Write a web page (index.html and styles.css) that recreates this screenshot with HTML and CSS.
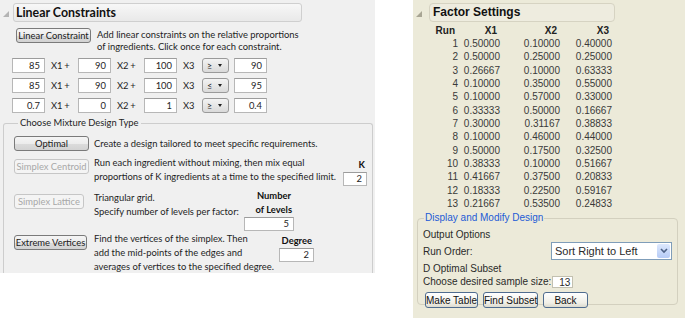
FILE: index.html
```html
<!DOCTYPE html>
<html lang="en">
<head>
    <meta charset="UTF-8">
    <meta name="viewport" content="width=device-width, initial-scale=1.0">
    <title>Mixture Design</title>
    <link rel="stylesheet" href="styles.css">
</head>
<body>
    <div class="page">
        <section class="panel-left">
            <div class="outline-head">
                <svg class="disclosure" width="8" height="8" viewBox="0 0 8 8"><polygon points="7,1 7,7 1,7" fill="#b4b4b4"/></svg>
                <div class="outline-title">Linear Constraints</div>
            </div>

            <div class="lc-intro">
                <button class="btn btn--lc">Linear Constraint</button>
                <p>Add linear constraints on the relative proportions<br>of ingredients. Click once for each constraint.</p>
            </div>

            <div class="lc-row">
                <span class="num">85</span><span class="term">X1 +</span>
                <span class="num">90</span><span class="term">X2 +</span>
                <span class="num">100</span><span class="term term--last">X3</span>
                <span class="combo">&ge;<i class="caret"></i></span>
                <span class="num">90</span>
            </div>
            <div class="lc-row">
                <span class="num">85</span><span class="term">X1 +</span>
                <span class="num">90</span><span class="term">X2 +</span>
                <span class="num">100</span><span class="term term--last">X3</span>
                <span class="combo">&le;<i class="caret"></i></span>
                <span class="num">95</span>
            </div>
            <div class="lc-row">
                <span class="num">0.7</span><span class="term">X1 +</span>
                <span class="num">0</span><span class="term">X2 +</span>
                <span class="num">1</span><span class="term term--last">X3</span>
                <span class="combo">&ge;<i class="caret"></i></span>
                <span class="num">0.4</span>
            </div>

            <fieldset class="design-type">
                <legend>Choose Mixture Design Type</legend>

                <div class="opt-row opt-row--first">
                    <div class="opt-btn"><button class="btn btn--opt">Optimal</button></div>
                    <p class="opt-text">Create a design tailored to meet specific requirements.</p>
                </div>

                <div class="opt-row">
                    <div class="opt-btn"><button class="btn btn--centroid" disabled>Simplex Centroid</button></div>
                    <p class="opt-text opt-text--k">Run each ingredient without mixing, then mix equal<br>proportions of K ingredients at a time to the specified limit.</p>
                    <div class="param param--k">
                        <b>K</b>
                        <span class="num num--k">2</span>
                    </div>
                </div>

                <div class="opt-row">
                    <div class="opt-btn"><button class="btn btn--lattice" disabled>Simplex Lattice</button></div>
                    <p class="opt-text opt-text--lattice">Triangular grid.<br>Specify number of levels per factor:</p>
                    <div class="param param--levels">
                        <b>Number</b>
                        <b>of Levels</b>
                        <span class="num num--levels">5</span>
                    </div>
                </div>

                <div class="opt-row opt-row--last">
                    <div class="opt-btn"><button class="btn btn--ev">Extreme Vertices</button></div>
                    <p class="opt-text opt-text--ev">Find the vertices of the simplex. Then<br>add the mid-points of the edges and<br>averages of vertices to the specified degree.</p>
                    <div class="param param--degree">
                        <b>Degree</b>
                        <span class="num num--degree">2</span>
                    </div>
                </div>
            </fieldset>
        </section>

        <section class="panel-right">
            <div class="outline-head outline-head--xp">
                <svg class="disclosure" width="8" height="8" viewBox="0 0 8 8"><polygon points="7,1 7,7 1,7" fill="#a8a594"/></svg>
                <div class="outline-title">Factor Settings</div>
            </div>

            <div class="factor-table">
                <b>Run</b><b>X1</b><b>X2</b><b>X3</b>
                <span>1</span><span>0.50000</span><span>0.10000</span><span>0.40000</span>
                <span>2</span><span>0.50000</span><span>0.25000</span><span>0.25000</span>
                <span>3</span><span>0.26667</span><span>0.10000</span><span>0.63333</span>
                <span>4</span><span>0.10000</span><span>0.35000</span><span>0.55000</span>
                <span>5</span><span>0.10000</span><span>0.57000</span><span>0.33000</span>
                <span>6</span><span>0.33333</span><span>0.50000</span><span>0.16667</span>
                <span>7</span><span>0.30000</span><span>0.31167</span><span>0.38833</span>
                <span>8</span><span>0.10000</span><span>0.46000</span><span>0.44000</span>
                <span>9</span><span>0.50000</span><span>0.17500</span><span>0.32500</span>
                <span>10</span><span>0.38333</span><span>0.10000</span><span>0.51667</span>
                <span>11</span><span>0.41667</span><span>0.37500</span><span>0.20833</span>
                <span>12</span><span>0.18333</span><span>0.22500</span><span>0.59167</span>
                <span>13</span><span>0.21667</span><span>0.53500</span><span>0.24833</span>
            </div>

            <fieldset class="modify">
                <legend>Display and Modify Design</legend>
                <div class="mod-line">Output Options</div>
                <div class="mod-line mod-line--order">
                    <span>Run Order:</span>
                    <div class="select">
                        <span>Sort Right to Left</span>
                        <span class="select-btn">
                            <svg width="8" height="6" viewBox="0 0 8 6"><polyline points="1,1 4,4 7,1" fill="none" stroke="#4d6185" stroke-width="1.6"/></svg>
                        </span>
                    </div>
                </div>
                <div class="mod-line">D Optimal Subset</div>
                <div class="mod-line mod-line--size">
                    <span>Choose desired sample size:</span>
                    <span class="xp-num">13</span>
                </div>
                <div class="mod-actions">
                    <button class="xp-btn xp-btn--make">Make Table</button>
                    <button class="xp-btn xp-btn--find">Find Subset</button>
                    <button class="xp-btn xp-btn--back">Back</button>
                </div>
            </fieldset>
        </section>
    </div>
</body>
</html>
```

FILE: styles.css
```css
body {
    margin: 0;
    background: #ffffff;
    font-family: Lato, "Noto Sans", sans-serif;
    font-size: 9.4px;
    color: #1e1e1e;
}
.page {
    display: flex;
    align-items: flex-start;
}
p {
    margin: 0;
}

/* left: JMP style panel */
.panel-left {
    width: 375px;
    height: 273px;
    background: #f0f0f0;
    padding-top: 3px;
    box-sizing: border-box;
    overflow: hidden;
}
.outline-head {
    display: flex;
    align-items: center;
    height: 19px;
}
.disclosure {
    margin: 2px 3px 0 2px;
}
.outline-title {
    width: 289px;
    height: 19px;
    box-sizing: border-box;
    border: 1px solid #cfcfcf;
    border-radius: 3px;
    background: linear-gradient(#f7f7f7, #e9e9e9);
    font-weight: bold;
    font-size: 12.4px;
    line-height: 17px;
    padding-left: 2px;
    color: #111;
}
.lc-intro {
    display: flex;
    align-items: flex-start;
    margin-top: 6px;
    padding-left: 16px;
}
.lc-intro p {
    margin: 1px 0 0 6px;
    line-height: 12px;
    white-space: nowrap;
}
.btn {
    height: 15px;
    padding: 0;
    border: 1px solid #7a7a7a;
    border-radius: 3px;
    background: linear-gradient(#f5f5f5 0%, #ececec 50%, #dcdcdc 51%, #d2d2d2 100%);
    font-family: inherit;
    font-size: 9.4px;
    line-height: 13px;
    color: #1a1a1a;
    white-space: nowrap;
}
.btn--lc { width: 75px; }
.btn--opt { width: 75px; }
.btn--centroid { width: 75px; }
.btn--lattice { width: 70px; }
.btn--ev { width: 73px; }
.btn:disabled {
    border-color: #c6c6c6;
    background: #f4f4f4;
    color: #a8a8a8;
}

.lc-row {
    display: flex;
    align-items: center;
    height: 15px;
    margin-top: 5px;
    padding-left: 12px;
}
.num {
    display: block;
    width: 33px;
    height: 15px;
    box-sizing: border-box;
    border: 1px solid #b7b7b7;
    border-top-color: #9c9c9c;
    background: #ffffff;
    text-align: right;
    padding-right: 4px;
    line-height: 13px;
}
.term {
    width: 33px;
    padding-left: 6px;
    box-sizing: border-box;
    letter-spacing: -0.2px;
}
.term--last {
    width: 25px;
}
.combo {
    display: flex;
    align-items: center;
    width: 27px;
    height: 15px;
    box-sizing: border-box;
    margin-right: 5px;
    padding-left: 4px;
    border: 1px solid #9a9a9a;
    border-radius: 3px;
    background: linear-gradient(#f3f3f3, #dadada);
    font-size: 9px;
}
.caret {
    margin-left: 6px;
    border-left: 2.5px solid transparent;
    border-right: 2.5px solid transparent;
    border-top: 3px solid #222;
}

.design-type {
    margin: 4px 2px 0 3px;
    padding: 7px 0 0 10px;
    height: 160px;
    border: 1px solid #cdcdcd;
    border-bottom: none;
    border-radius: 3px 3px 0 0;
}
.design-type legend {
    padding: 0 2px;
    margin-left: 4px;
    line-height: 12px;
}
.opt-row {
    display: flex;
    align-items: flex-start;
    margin-top: 5px;
}
.opt-row--first {
    margin-top: 0;
}
.opt-row--last {
    margin-top: 1px;
}
.opt-btn {
    width: 80px;
    flex-shrink: 0;
    padding-top: 3px;
}
.opt-row--first .opt-btn {
    padding-top: 0;
}
.opt-text {
    line-height: 14px;
    white-space: nowrap;
}
.opt-row--first .opt-text {
    margin-top: 1px;
}
.opt-text--k { width: 249px; }
.opt-text--lattice { width: 150px; }
.opt-text--ev { width: 185px; }
.param {
    display: flex;
    flex-direction: column;
    align-items: flex-end;
    line-height: 14px;
}
.param b {
    padding-right: 2px;
    color: #111;
}
.num--k {
    width: 24px;
    height: 14px;
    line-height: 12px;
}
.num--levels {
    width: 50px;
    height: 14px;
    line-height: 12px;
}
.num--degree {
    width: 35px;
    height: 14px;
    line-height: 12px;
}
.param--k {
    margin-top: 2px;
}
.param--levels {
    margin-top: -2px;
}
.param--levels b:first-child {
    padding-right: 3px;
}
.param--degree {
    margin-top: 2px;
}

/* right: XP style panel */
.panel-right {
    width: 272px;
    height: 318px;
    margin-left: 38px;
    padding-top: 3px;
    box-sizing: border-box;
    background: #ecead9;
    font-family: "Liberation Sans", Arial, sans-serif;
    font-size: 10px;
    color: #2a2a2a;
}
.outline-head--xp .disclosure {
    margin: 2px 6px 0 2px;
}
.outline-head--xp .outline-title {
    width: 186px;
    border-color: #d6d3c2;
    border-radius: 4px;
    background: #eeecdf;
    font-family: "Liberation Sans", Arial, sans-serif;
    font-size: 12px;
    padding-left: 3px;
    color: #111;
}
.factor-table {
    display: grid;
    grid-template-columns: 45px 42px 60px 52px;
    grid-template-rows: 12px;
    grid-auto-rows: 13.33px;
    margin-top: 3px;
    text-align: right;
    color: #3a3a3a;
}
.factor-table b {
    color: #222;
    line-height: 12px;
    padding-right: 3px;
}
.factor-table span {
    line-height: 13.33px;
}

.modify {
    margin: 2px 7px 0 4px;
    padding: 4px 5px 0 5px;
    height: 87px;
    border: 1px solid #d3d0bf;
    border-radius: 4px;
}
.modify legend {
    padding: 0 1px;
    margin-left: 1px;
    color: #1d5bd6;
    line-height: 12px;
}
.mod-line {
    line-height: 13px;
    white-space: nowrap;
}
.mod-line--order {
    display: flex;
    align-items: center;
    justify-content: space-between;
    height: 18px;
    margin: 1px 0 2px;
}
.select {
    display: flex;
    align-items: center;
    justify-content: space-between;
    width: 121px;
    height: 18px;
    box-sizing: border-box;
    border: 1px solid #7f9db9;
    background: #ffffff;
    padding: 1px 1px 1px 3px;
    font-size: 11px;
}
.select-btn {
    display: flex;
    align-items: center;
    justify-content: center;
    width: 13px;
    height: 14px;
    border-radius: 2px;
    background: linear-gradient(#dde8fd, #b6cbf6);
}
.mod-line--size {
    display: flex;
    align-items: center;
    height: 13px;
}
.xp-num {
    width: 21px;
    height: 12px;
    box-sizing: border-box;
    margin-left: 1px;
    border: 1px solid #c2c0b0;
    background: #ffffff;
    text-align: right;
    padding-right: 2px;
    line-height: 11px;
}
.mod-actions {
    display: flex;
    gap: 5px;
    margin-top: 4px;
    padding-left: 2px;
}
.xp-btn {
    height: 16px;
    padding: 0;
    border: 1px solid #4f6c8f;
    border-radius: 3px;
    background: linear-gradient(#ffffff, #f0efe7 70%, #dcdbd0);
    font-family: "Liberation Sans", Arial, sans-serif;
    font-size: 10px;
    color: #111;
    white-space: nowrap;
}
.xp-btn--make { width: 53px; }
.xp-btn--find { width: 55px; }
.xp-btn--back { width: 45px; }
```
